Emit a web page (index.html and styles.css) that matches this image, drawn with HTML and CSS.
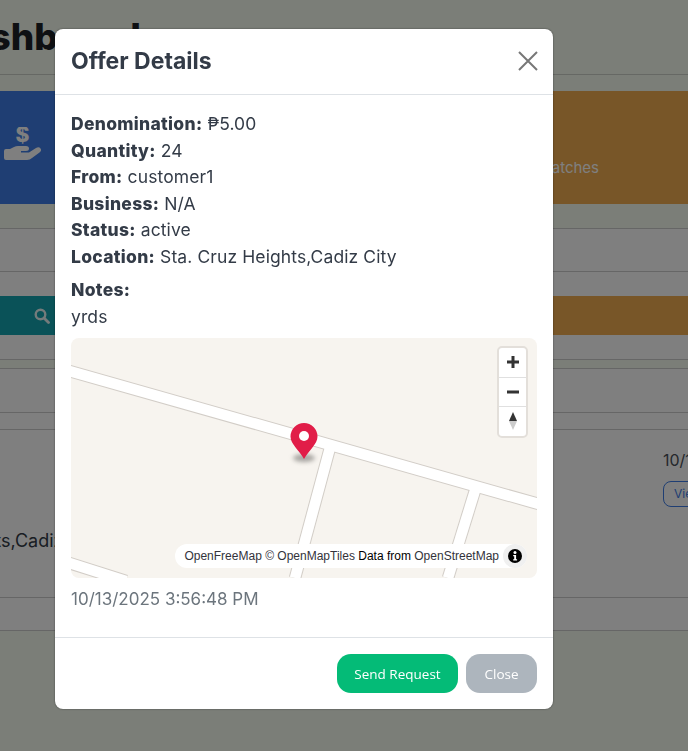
FILE: index.html
```html
<!DOCTYPE html>
<html lang="en">
<head>
    <meta charset="UTF-8">
    <meta name="viewport" content="width=device-width, initial-scale=1.0">
    <title>Dashboard</title>
    <link rel="stylesheet" href="styles.css">
</head>
<body>
    <!-- Page behind the modal (scrolled a little to the right) -->
    <div id="page">
        <h1 class="page-title">Dashboard</h1>

        <div class="stat-row">
            <div class="stat-card stat-blue">
                <svg class="stat-icon" viewBox="0 0 37 34" aria-hidden="true">
                    <path d="M0 24Q0 22 2 22H6L10 20Q12 19 14 19H22Q25 19 25 21.500 25 24 22 24H17V25.500H25L32 21Q35 19.500 36.500 21.500 38 23.500 35.500 25.500L28 31Q26 33 23 33H2Q0 33 0 31Z" fill="#fff"/>
                    <text class="stat-dollar" x="18.500" y="15" text-anchor="middle">$</text>
                </svg>
            </div>
            <div class="stat-card stat-orange">
                <span class="stat-label">Offer Matches</span>
            </div>
        </div>

        <div class="panel">
            <div class="panel-head"></div>
            <div class="tab-row">
                <div class="tab tab-teal">
                    <svg class="tab-icon" viewBox="0 0 16 16" aria-hidden="true">
                        <circle cx="6.500" cy="6.500" r="4.800" fill="none" stroke="#fff" stroke-width="2.400"/>
                        <path d="M10 10l4.500 4.500" stroke="#fff" stroke-width="2.800" stroke-linecap="round"/>
                    </svg>
                </div>
                <div class="tab tab-orange"></div>
            </div>
            <div class="band"></div>
            <div class="table-head"></div>
            <div class="table-row">
                <span class="cell-location">Sta. Cruz Heights,Cadiz City</span>
                <div class="cell-date">
                    <span>10/13/2025</span>
                    <a class="view-btn">View</a>
                </div>
            </div>
            <div class="table-foot"></div>
        </div>
    </div>

    <div id="backdrop"></div>

    <!-- Offer details modal -->
    <div id="modal-wrap">
        <div class="modal">
            <div class="modal-header">
                <h2>Offer Details</h2>
                <svg class="modal-close" viewBox="0 0 20 20" aria-label="Close">
                    <path d="M1 1l18 18M19 1L1 19" stroke="#777" stroke-width="2"/>
                </svg>
            </div>
            <div class="modal-body">
                <p><strong>Denomination:</strong> ₱5.00</p>
                <p><strong>Quantity:</strong> 24</p>
                <p><strong>From:</strong> customer1</p>
                <p><strong>Business:</strong> N/A</p>
                <p><strong>Status:</strong> active</p>
                <p><strong>Location:</strong> Sta. Cruz Heights,Cadiz City</p>
                <p class="notes-label"><strong>Notes:</strong></p>
                <p>yrds</p>

                <div class="map">
                    <svg class="map-canvas" viewBox="0 0 466 240" aria-hidden="true">
                        <g class="road-casing">
                            <path d="M-5 32 L471 167"/>
                            <path d="M260 106 L224 240"/>
                            <path d="M406 146 L377 240"/>
                            <path d="M-5 224 L55 243"/>
                        </g>
                        <g class="road-fill">
                            <path d="M-5 32 L471 167"/>
                            <path d="M260 106 L224 240"/>
                            <path d="M406 146 L377 240"/>
                            <path d="M-5 224 L55 243"/>
                        </g>
                        <ellipse class="pin-shadow" cx="233" cy="120" rx="11" ry="4"/>
                        <path d="M233 121 C228 112 219.500 106 219.500 98.500 A13.500 13.500 0 0 1 246.500 98.500 C246.500 106 238 112 233 121Z" fill="#e11d48"/>
                        <circle cx="233" cy="98" r="5" fill="#fff"/>
                    </svg>

                    <div class="map-controls">
                        <div class="map-btn">
                            <svg viewBox="0 0 14 14"><path d="M7 1v12M1 7h12" stroke="#333" stroke-width="3"/></svg>
                        </div>
                        <div class="map-btn">
                            <svg viewBox="0 0 14 14"><path d="M1 7h12" stroke="#333" stroke-width="3"/></svg>
                        </div>
                        <div class="map-btn">
                            <svg viewBox="0 0 14 20"><path d="M7 1l4 9H3z" fill="#333"/><path d="M7 19l4-9H3z" fill="#ccc"/></svg>
                        </div>
                    </div>

                    <div class="map-attrib">
                        <span class="attrib-text"><a>OpenFreeMap</a> <a>© OpenMapTiles</a> Data from <a>OpenStreetMap</a></span>
                        <span class="attrib-info">
                            <svg viewBox="0 0 14 14"><circle cx="7" cy="7" r="7" fill="#000"/><circle cx="7" cy="3.600" r="1.500" fill="#fff"/><path d="M5.200 6h2.900v4.200h1v1.300H5.200v-1.300h1V7.300h-1z" fill="#fff"/></svg>
                        </span>
                    </div>
                </div>

                <p class="timestamp">10/13/2025 3:56:48 PM</p>
            </div>
            <div class="modal-footer">
                <button class="btn btn-send">Send Request</button>
                <button class="btn btn-close">Close</button>
            </div>
        </div>
    </div>
</body>
</html>
```

FILE: styles.css
```css
html, body {
    margin: 0;
    height: 751px;
    overflow: hidden;
}
body {
    font-family: "Inter", sans-serif;
    background-color: #f6fdf0;
    color: #333b47;
}

/* page behind the modal */
#page {
    width: 688px;
    height: 751px;
    overflow: hidden;
}
.page-title {
    margin: 0 0 0 -59px;
    height: 75px;
    box-sizing: border-box;
    padding-top: 17px;
    font-size: 37px;
    line-height: 40px;
    font-weight: 800;
    color: #1d2126;
    border-bottom: 1px solid #ccd0c8;
}
.stat-row {
    display: flex;
    margin-top: 16px;
    height: 113px;
}
.stat-card { flex: 1; }
.stat-blue {
    background-color: #3e7de6;
    display: flex;
    align-items: center;
    padding-left: 4px;
}
.stat-orange {
    background-color: #f0ac50;
    display: flex;
    align-items: flex-end;
    justify-content: flex-end;
    padding: 0 89px 27px 0;
}
.stat-icon { width: 37px; height: 34px; margin-bottom: 7px; }
.stat-dollar {
    font-size: 21px;
    font-weight: 800;
    fill: #fff;
}
.stat-label {
    font-size: 15px;
    color: #fff;
}

.panel {
    margin-top: 24px;
    background-color: #fff;
    height: 403px;
    border-top: 1px solid #ccc;
    box-sizing: border-box;
}
.panel-head {
    height: 42px;
    border-bottom: 1px solid #ccc;
}
.tab-row {
    display: flex;
    margin-top: 24px;
    height: 39px;
}
.tab { flex: 1; }
.tab-teal {
    background-color: #14a4b0;
    display: flex;
    align-items: center;
    padding-left: 34px;
}
.tab-orange { background-color: #f0ac50; }
.tab-icon { width: 16px; height: 16px; opacity: 0.9; }
.band {
    margin-top: 24px;
    height: 8px;
    background-color: #f6fdf0;
    border-top: 1px solid #ccc;
    border-bottom: 1px solid #ccc;
}
.table-head {
    height: 43px;
    border-bottom: 1px solid #ccc;
}
.table-row {
    margin-top: 16px;
    height: 169px;
    box-sizing: border-box;
    display: flex;
    border-top: 1px solid #ccc;
    border-bottom: 1px solid #ccc;
}
.cell-location {
    flex: 1;
    min-width: 0;
    margin: 99px 0 0 -138px;
    font-size: 18px;
    line-height: 24px;
    white-space: nowrap;
    color: #333b47;
}
.cell-date {
    flex: 0 0 25px;
    min-width: 0;
    display: flex;
    flex-direction: column;
    align-items: flex-start;
    padding-top: 19px;
    font-size: 16px;
    line-height: 22px;
    white-space: nowrap;
    color: #4a5058;
}
.view-btn {
    margin-top: 10px;
    padding: 4px 10px;
    font-size: 12px;
    line-height: 16px;
    color: #3e7de6;
    border: 1px solid #3e7de6;
    border-radius: 8px;
}
.table-foot {
    height: 32px;
    border-bottom: 1px solid #ccc;
}

#backdrop {
    position: fixed;
    inset: 0;
    background-color: rgba(0,0,0,0.5);
}

/* modal */
#modal-wrap {
    position: fixed;
    inset: 0;
    padding: 29px 0 0 55px;
}
.modal {
    width: 498px;
    height: 680px;
    background-color: #fff;
    border-radius: 8px;
    box-shadow: 0 0 2px rgba(0,0,0,0.5);
    display: flex;
    flex-direction: column;
}
.modal-header {
    height: 66px;
    box-sizing: border-box;
    padding: 0 15px 1px 16px;
    display: flex;
    align-items: center;
    justify-content: space-between;
    border-bottom: 1px solid #dee2e6;
}
.modal-header h2 {
    margin: 0;
    font-size: 23px;
    font-weight: 700;
    color: #333b47;
}
.modal-close { width: 20px; height: 20px; }
.modal-body {
    flex: 1;
    padding: 16px 16px 0;
    font-size: 17.500px;
    letter-spacing: 0.1px;
    line-height: 26.500px;
}
.modal-body p { margin: 0; }
.modal-body .notes-label { margin-top: 7px; }
.modal-body strong { font-weight: 800; letter-spacing: 0.3px; }

.map {
    position: relative;
    margin-top: 8px;
    height: 240px;
    border-radius: 8px;
    overflow: hidden;
    background-color: #f7f4ef;
    letter-spacing: 0;
}
.map-canvas { display: block; width: 466px; height: 240px; }
.road-casing path {
    fill: none;
    stroke: #d2cdc7;
    stroke-width: 12.500;
}
.road-fill path {
    fill: none;
    stroke: #fff;
    stroke-width: 10.500;
}
.pin-shadow { fill: #a8a6a2; filter: blur(2px); }
.map-controls {
    position: absolute;
    top: 8px;
    right: 9px;
    width: 27px;
    background-color: #fff;
    border: 2px solid #e3dfda;
    border-radius: 5px;
}
.map-btn {
    height: 28.500px;
    display: flex;
    align-items: center;
    justify-content: center;
}
.map-btn + .map-btn { border-top: 1px solid #e0e0e0; }
.map-btn svg { width: 14px; height: 14px; }
.map-btn:last-child svg { height: 20px; }
.map-attrib {
    position: absolute;
    right: 10px;
    bottom: 10px;
    height: 24px;
    padding-left: 9px;
    display: flex;
    align-items: center;
    gap: 4px;
    background-color: #fff;
    border-radius: 12px;
    font-family: "Liberation Sans", Arial, sans-serif;
    font-size: 12px;
    line-height: 24px;
    color: #000;
    white-space: nowrap;
}
.map-attrib a { color: #33333b; }
.attrib-info {
    width: 24px;
    height: 24px;
    border-radius: 50%;
    background-color: #f0f0f0;
    display: flex;
    align-items: center;
    justify-content: center;
}
.attrib-info svg { width: 14px; height: 14px; }
.modal-body .timestamp {
    margin-top: 8px;
    font-size: 17px;
    letter-spacing: 0;
    color: #6c757d;
}

.modal-footer {
    height: 72px;
    box-sizing: border-box;
    padding: 16px;
    display: flex;
    justify-content: flex-end;
    gap: 8px;
    border-top: 1px solid #dee2e6;
}
.btn {
    height: 39px;
    border: none;
    border-radius: 14px;
    font-family: "Open Sans", sans-serif;
    font-size: 13.500px;
    color: #fff;
    padding: 0;
}
.btn-send { width: 121px; background-color: #04bb77; }
.btn-close { width: 71px; background-color: #adb5bd; }
```
